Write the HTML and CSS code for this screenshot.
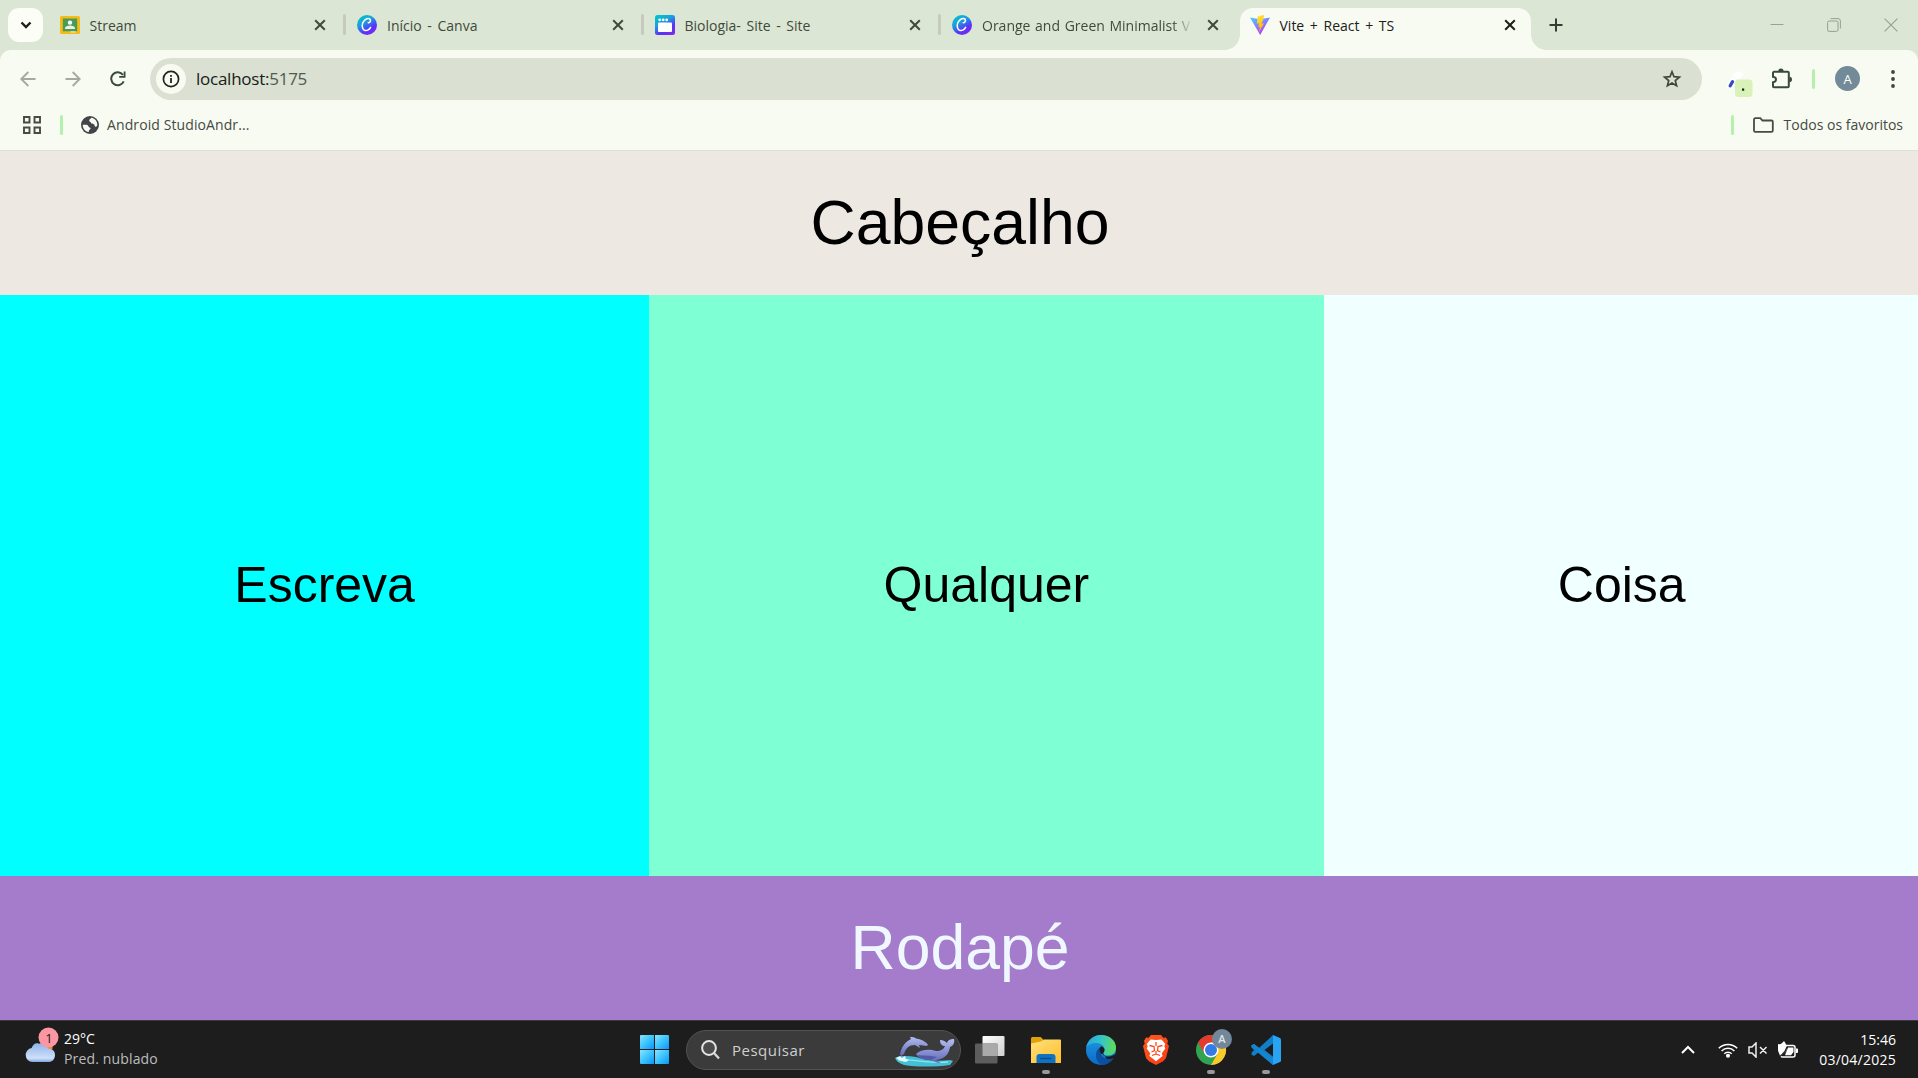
FILE: index.html
```html
<!DOCTYPE html>
<html lang="pt-BR">
<head>
<meta charset="utf-8">
<title>Vite + React + TS</title>
<link rel="stylesheet" href="styles.css">
</head>
<body>
<svg width="0" height="0" class="defs" aria-hidden="true">
  <defs>
    <linearGradient id="canva" x1="0.2" y1="0" x2="0.8" y2="1"><stop offset="0" stop-color="#00c4cc"/><stop offset=".35" stop-color="#1c9fdc"/><stop offset=".7" stop-color="#5a32fa"/><stop offset="1" stop-color="#7d2ae8"/></linearGradient>
    <linearGradient id="viteA" x1="0" y1="0" x2=".6" y2="1"><stop offset="0" stop-color="#41d1ff"/><stop offset="1" stop-color="#bd34fe"/></linearGradient>
    <linearGradient id="viteB" x1=".4" y1="0" x2=".6" y2="1"><stop offset="0" stop-color="#ffea83"/><stop offset=".1" stop-color="#ffdd35"/><stop offset="1" stop-color="#ffa800"/></linearGradient>
    <linearGradient id="win" x1="0" y1="0" x2="1" y2="1"><stop offset="0" stop-color="#8ae3ff"/><stop offset=".5" stop-color="#3cc4fd"/><stop offset="1" stop-color="#0a95fb"/></linearGradient>
    <linearGradient id="cloud" x1="0" y1="0" x2="0" y2="1"><stop offset="0" stop-color="#8fb2ea"/><stop offset=".8" stop-color="#cfe0f8"/><stop offset="1" stop-color="#7ea4e4"/></linearGradient>
    <linearGradient id="folder" x1="0" y1="0" x2="1" y2="1"><stop offset="0" stop-color="#ffe07c"/><stop offset="1" stop-color="#fdbf2d"/></linearGradient>
    <linearGradient id="edgeTop" x1="0" y1=".4" x2="1" y2=".5"><stop offset="0" stop-color="#23a9e4"/><stop offset=".5" stop-color="#35c5c4"/><stop offset="1" stop-color="#62dc55"/></linearGradient>
    <linearGradient id="edgeSide" x1="0" y1="0" x2="0" y2="1"><stop offset="0" stop-color="#2199e2"/><stop offset="1" stop-color="#0a6bc9"/></linearGradient>
    <linearGradient id="brave" x1="0" y1="0" x2="1" y2="1"><stop offset="0" stop-color="#ff5a1f"/><stop offset="1" stop-color="#fb3a12"/></linearGradient>
    <linearGradient id="whale" x1="0" y1="0" x2="0" y2="1"><stop offset="0" stop-color="#b3bdf0"/><stop offset="1" stop-color="#6067b8"/></linearGradient>
    <linearGradient id="tv" x1="0" y1="0" x2="1" y2="1"><stop offset="0" stop-color="#fff"/><stop offset="1" stop-color="#cfcfcf"/></linearGradient>
    <symbol id="close" viewBox="0 0 12 12"><path d="M1.2 1.2 10.8 10.8M10.8 1.2 1.2 10.8" stroke="currentColor" stroke-width="2" fill="none"/></symbol>
    <symbol id="canva-c" viewBox="0 0 20 20"><circle cx="10" cy="10" r="10" fill="url(#canva)"/><path d="M11.2 7.700c1.300.2 2.500-1.200 2.200-2.700C13 3.300 10.400 3 8.300 4.700 5.700 6.900 4.700 10.500 5.700 13.300c.9 2.500 3.500 2.800 5.500 1.600 1-.6 1.800-1.500 2.400-2.600" fill="none" stroke="#fff" stroke-width="1.500" stroke-linecap="round"/></symbol>
  </defs>
</svg>

<div class="tabstrip">
  <button class="tab-search"><svg width="12" height="8" viewBox="0 0 12 8"><path d="M1.500 1.500 6 6l4.500-4.500" fill="none" stroke="#1c211b" stroke-width="2.400"/></svg></button>
  <div class="tab">
    <svg class="fav" width="20" height="20" viewBox="0 0 20 20"><rect y="1" width="20" height="18" rx="1.500" fill="#f7bb16"/><rect x="2.800" y="3.500" width="14.400" height="12.800" fill="#4a9b58"/><circle cx="10" cy="7.600" r="2.200" fill="#fff"/><path d="M5 14v-.8c0-1.800 2.500-2.600 5-2.600s5 .8 5 2.600v.8z" fill="#e6f3e8"/><path d="M10.500 16.300h5V17.500h-5z" fill="#e5e5e5"/></svg>
    <span class="title">Stream</span>
    <svg class="x" width="12" height="12"><use href="#close"/></svg>
  </div>
  <div class="tab sep">
    <svg class="fav" width="20" height="20"><use href="#canva-c"/></svg>
    <span class="title">Início - Canva</span>
    <svg class="x" width="12" height="12"><use href="#close"/></svg>
  </div>
  <div class="tab sep">
    <svg class="fav" width="20" height="20" viewBox="0 0 20 20"><rect width="20" height="20" rx="2.500" fill="url(#canva)"/><rect x="3" y="7.500" width="14" height="9.500" rx="1" fill="#fff"/><g fill="#fff"><circle cx="4.700" cy="4.800" r="1.400"/><circle cx="8.200" cy="4.800" r="1.400"/><circle cx="11.700" cy="4.800" r="1.400"/></g></svg>
    <span class="title">Biologia- Site - Site</span>
    <svg class="x" width="12" height="12"><use href="#close"/></svg>
  </div>
  <div class="tab sep">
    <svg class="fav" width="20" height="20"><use href="#canva-c"/></svg>
    <span class="title long">Orange and Green Minimalist V</span>
    <svg class="x" width="12" height="12"><use href="#close"/></svg>
  </div>
  <div class="tab active">
    <svg class="fav" width="20" height="20" viewBox="0 0 20 20"><path d="M0 2.500 10.200 20 20 2.500 10 4.200z" fill="url(#viteA)"/><path d="M14.200 0 7.600 1.300 6.800 8.800l2.300-.5-.9 4 1.800-.5-1.200 5.700 5.300-9.300-2.700.5 2-4.200z" fill="url(#viteB)"/></svg>
    <span class="title">Vite + React + TS</span>
    <svg class="x" width="12" height="12"><use href="#close"/></svg>
  </div>
  <svg class="newtab" width="14" height="14" viewBox="0 0 14 14"><path d="M7 .5v13M.5 7h13" stroke="#343d32" stroke-width="2"/></svg>
  <div class="window-buttons">
    <svg width="14" height="14" viewBox="0 0 14 14"><path d="M.5 6.500h13" stroke="#99a294"/></svg>
    <svg width="14" height="14" viewBox="0 0 14 14" fill="none" stroke="#96a091"><rect x=".6" y="3" width="10.400" height="10.400" rx="1.500"/><path d="M3.500.6H11a2.400 2.400 0 0 1 2.400 2.400v7.500"/></svg>
    <svg width="14" height="14" viewBox="0 0 14 14"><path d="m.6.6 12.800 12.800M13.400.6.6 13.400" stroke="#96a091" stroke-width="1.100"/></svg>
  </div>
</div>

<div class="toolbar">
  <svg class="nav" width="16" height="16" viewBox="0 0 16 16" fill="none" stroke="#a4aaa1" stroke-width="1.900"><path d="M15.500 8H2M8.300 1 1.300 8l7 7"/></svg>
  <svg class="nav" width="16" height="16" viewBox="0 0 16 16" fill="none" stroke="#a4aaa1" stroke-width="1.900"><path d="M.5 8H14M7.700 1l7 7-7 7"/></svg>
  <svg class="nav" width="16" height="16" viewBox="0 0 16 16"><path d="M13.700 10.300A6.500 6.500 0 1 1 13 3.900" fill="none" stroke="#3a4a38" stroke-width="2"/><path d="M15.500.5V6.700H9.200V4.900h4.500V.5z" fill="#3a4a38"/></svg>
  <div class="omnibox">
    <span class="info"><svg width="18" height="18" viewBox="0 0 18 18"><circle cx="9" cy="9" r="7.600" fill="none" stroke="#20251f" stroke-width="1.700"/><path d="M8.100 8h1.800v5H8.100zM8.100 4.900h1.800v1.800H8.100z" fill="#20251f"/></svg></span>
    <span class="url">localhost:<span>5175</span></span>
    <svg class="star" width="20" height="20" viewBox="0 0 20 20"><path d="m10 2.800 2 4.900 5.400.4-4.100 3.500 1.300 5.200L10 14l-4.600 2.800 1.300-5.200-4.100-3.500 5.400-.4z" fill="none" stroke="#3f473c" stroke-width="1.700"/></svg>
  </div>
  <svg class="ext" width="28" height="28" viewBox="0 0 28 28"><path d="M6.500 4.500 12.500.8l5 3.500-4 5-3.500-.8z" fill="#fff"/><path d="m3.800 15.500 2.700-4.700" stroke="#fff" stroke-width="6" stroke-linecap="round"/><path d="m4.200 15.700 2.300-4" stroke="#334bc4" stroke-width="3.300" stroke-linecap="round"/><rect x="9" y="9.500" width="17.500" height="17.500" rx="3.500" fill="#d9f2b7"/><rect x="16" y="18.500" width="2.200" height="2.200" fill="#16200f"/></svg>
  <svg class="puzzle" width="22" height="22" viewBox="0 0 22 22"><path d="M3 3.800h13.800a1 1 0 0 1 1 1v13.400a1 1 0 0 1-1 1H3a1 1 0 0 1-1-1v-4c4-.8 4-4.800 0-5.400v-4a1 1 0 0 1 1-1z" fill="none" stroke="#3a4a38" stroke-width="2"/><path d="M7.200 3.300a2.700 2.700 0 0 1 5.400 0zM18.300 8.800a2.700 2.700 0 0 1 0 5.400z" fill="#3a4a38"/></svg>
  <i class="mint"></i>
  <span class="avatar">A</span>
  <svg class="dots" width="4" height="18" viewBox="0 0 4 18" fill="#3a4a38"><circle cx="2" cy="2" r="1.900"/><circle cx="2" cy="9" r="1.900"/><circle cx="2" cy="16" r="1.900"/></svg>
</div>

<div class="bookmarks">
  <svg width="18" height="18" viewBox="0 0 18 18" fill="none" stroke="#474b45" stroke-width="1.900"><path d="M1 1h5.500v5.500H1zM11.500 1H17v5.500h-5.500zM1 11.500h5.500V17H1zM11.500 11.500H17V17h-5.500z"/></svg>
  <i class="mint first"></i>
  <svg class="globe" width="18" height="18" viewBox="0 0 18 18"><circle cx="9" cy="9" r="9" fill="#41454a"/><path d="M10.200 1.800c-.4 1.300-1.800 1.200-2 2.700-.1 1.500 1.500 1 1.800 2.200.3 1.700 2.300.5 3.200 1.800.6 1 .2 1.900 1.300 2.200.9.200 1.600-.6 1.800-1.700C16.300 5 13.800 2.200 10.200 1.800zM1.700 8.700c1.500.4 4-.3 5.300.7.900.8.300 1.900 1.800 2.200 1.200.3.900 1.800-.2 2.100-.9.300-.6 1.400-.9 2.400C4 15.500 1.700 12.300 1.700 8.700z" fill="#f8fbf1"/></svg>
  <span class="bm">Android StudioAndr...</span>
  <i class="mint last"></i>
  <svg class="dir" width="21" height="16" viewBox="0 0 21 16"><path d="M1 13.500v-11A1.300 1.300 0 0 1 2.300 1.200h5L9.500 3.500h9a1.300 1.300 0 0 1 1.300 1.300v8.700a1.300 1.300 0 0 1-1.300 1.300H2.300A1.300 1.300 0 0 1 1 13.500z" fill="none" stroke="#474b45" stroke-width="1.800"/></svg>
  <span class="all">Todos os favoritos</span>
</div>

<main class="page">
  <header class="page-head">Cabeçalho</header>
  <section class="columns">
    <div class="escreva">Escreva</div>
    <div class="qualquer">Qualquer</div>
    <div class="coisa">Coisa</div>
  </section>
  <footer class="page-foot">Rodapé</footer>
</main>

<div class="taskbar">
  <div class="weather">
    <svg width="36" height="40" viewBox="0 0 36 40"><path d="M20 13h9.500v9H22z" fill="#f5831f"/><path d="M8.500 36a7.500 7.500 0 0 1-.6-14.900C9.500 16.800 12.500 15 16 16.500c3-2.300 8.500-.5 9.500 5 4.500-.3 8 3.200 7.500 7.500-.3 4-3 7-7 7z" fill="url(#cloud)" transform="translate(1.300 1.500) scale(.93)"/><circle cx="25.500" cy="10.500" r="10" fill="#fb96a3"/></svg>
    <b>1</b>
    <div><p>29°C</p><p class="dim">Pred. nublado</p></div>
  </div>
  <div class="apps">
    <span class="app"><svg width="29" height="29" viewBox="0 0 29 29" fill="url(#win)"><path d="M1 0h13v14H0V1a1 1 0 0 1 1-1z"/><path d="M15 0h13a1 1 0 0 1 1 1v13H15z"/><path d="M0 15h14v14H1a1 1 0 0 1-1-1z"/><path d="M15 15h14v13a1 1 0 0 1-1 1H15z"/></svg></span>
    <div class="search">
      <svg width="19" height="20" viewBox="0 0 19 20"><circle cx="8" cy="8" r="6.900" fill="#4c4c4c" stroke="#e4e4e4" stroke-width="2"/><path d="m13 13 5 5.500" stroke="#d8d8d8" stroke-width="2.400"/></svg>
      <span>Pesquisar</span>
      <svg class="dolphin" width="60" height="32" viewBox="0 0 60 32"><path d="M0 22c6-3 14-2 21-1 9 3 20 5 34 3l3 1-3 4c-14 2-34 2-46 0C4 27 1 25 0 22z" fill="#43bfd6"/><path d="M3 24c12-2 24 4 50 2" stroke="#8fe6ee" stroke-width="1.300" fill="none"/><path d="M5 18c2-8 5-12 11-15l-1-2c4-.5 5 .8 6 1.500 5 .5 9 3 12 6l-1 1.500-8-1 1 3-5-3c-6 0-9 3-11 9l-3 2z" fill="url(#whale)"/><path d="M21 18c5-5 14-5 20-3 5 0 8-2 9-5-3 0-5-2-5-6 3 0 5 1 7 3 1-3 3-4 7-4 1 4-1 7-4 8-1 7-5 12-14 13l5 3c-4 0-7-1-9-3-6 0-13-1-16-6z" fill="url(#whale)"/><path d="M22 19c7 1 12 0 20 2l-6 3c-6 0-10-1-14-5z" fill="#555aa7"/><path d="m1 22 4-2 2 2 3-2 1 3 3 1-3 2-5-1z" fill="#e9fbfd"/></svg>
    </div>
    <span class="app tv"><svg width="30" height="28" viewBox="0 0 30 28"><rect x="7.500" width="22" height="20" rx="1" fill="url(#tv)"/><rect x="0" y="7.500" width="22.500" height="20" rx="1" fill="#5d5d5d"/><path d="M7.500 7.500h15V20h-15z" fill="#aaa"/></svg></span>
    <span class="app run"><svg width="30" height="30" viewBox="0 0 30 30"><path d="M0 3.500A1.500 1.500 0 0 1 1.500 2h8.200l3 3H28v6H0z" fill="#e0a10c"/><path d="M0 8.500 10 6.500l3-2h16a1 1 0 0 1 1 1V28H0z" fill="url(#folder)"/><path d="M5.500 28v-6a3 3 0 0 1 3-3h13a3 3 0 0 1 3 3v6z" fill="#0f73c4"/><path d="M9 23.500h11.500" stroke="#0a4a8a" stroke-width="1.400"/></svg></span>
    <span class="app"><svg width="30" height="30" viewBox="0 0 30 30"><circle cx="15" cy="15" r="15" fill="url(#edgeSide)"/><path d="M.2 12.500C1.500 5 7.500 0 15 0c8.500 0 15 5.500 15 12.500 0 5-3.500 8-8 8-3.500 0-5-1.200-4.800-2.300.2-.7 1.500-1.500 1.300-4C18 10.300 14.500 8 10 8 5.500 8 2 9.700.2 12.500z" fill="url(#edgeTop)"/><path d="M17.200 18.200c-.8 1.800 1.500 3.600 5.500 3.400 2.700-.2 4.700-1.200 6-2l1.300-1V30H24z" fill="#1d1d1d"/><path d="M10 20c0-4 2-7 5.500-8.500-4 6 1 12.500 7.500 12.500 2 0 3.700-.6 4.700-1-2.500 4.300-7 7-12 7-3.500-1.500-5.700-5.500-5.700-10z" fill="#0c4fa0"/><path d="M18.500 14.200c-.5-1.500-1.500-2.500-3-3-3 1.500-2 6 0 8 1.200-.2 1.300-.7 1.700-1 .2-.7 1.500-1.500 1.300-4z" fill="#1d1d1d"/></svg></span>
    <span class="app"><svg width="26" height="30" viewBox="0 0 26 30"><path d="M8 0h10l2.300 2.700 2.700-.3 2 3.600-.8 2.500L26 11l-3 12-2.800 3.300L13 30l-7.200-3.700L3 23 0 11l1.800-2.500L1 6l2-3.600 2.700.3z" fill="url(#brave)"/><path d="m13 5 5.500-.6L22.300 9l-1 2.300 1 2.200-3.600 5 1 2.500-2.700 2L13 26.300 9 23l-2.700-2 1-2.500-3.600-5 1-2.200-1-2.300 3.800-4.600z" fill="#fff"/><path d="m6.500 10.500 4.500 1 .5 4-3 1.500M19.500 10.500l-4.500 1-.5 4 3 1.500M13 7v4M9 20.500l4-1.500 4 1.500M13 16v3" fill="none" stroke="#fb4a1c" stroke-width="1.300"/></svg></span>
    <span class="app run"><svg class="chrome" width="37" height="36" viewBox="0 0 37 36"><circle cx="15" cy="21" r="15" fill="#32a350"/><path d="M2 13.500A15 15 0 0 1 28 13.500H15L8.500 24.700z" fill="#e33b2e"/><path d="M28 13.500A15 15 0 0 1 15 36l6.500-11.200L15 13.500z" fill="#fcc92b"/><circle cx="15" cy="21" r="7.500" fill="#fff"/><circle cx="15" cy="21" r="6" fill="#347be8"/><circle cx="26" cy="10" r="10" fill="#72889a"/><text x="26" y="14" text-anchor="middle" font-size="11" font-weight="600" fill="#dfe5ea">A</text></svg></span>
    <span class="app run"><svg width="30" height="30" viewBox="0 0 30 30"><path d="M22 0 8 13 3 9 .5 10.300v2L3 15 .5 17.800v2L3 21l5-4 14 13z" fill="#0f7fca"/><path d="M22 8.500 13.500 15 22 21.500z" fill="#1d1d1d"/><path d="m3 9 19 14v7L.5 12.300v-2z" fill="#1685cf"/><path d="m22 0 7 3a1.800 1.800 0 0 1 1 1.600v20.800a1.800 1.800 0 0 1-1 1.600l-7 3z" fill="#28a4f2"/></svg></span>
  </div>
  <div class="tray">
    <svg width="14" height="9" viewBox="0 0 14 9"><path d="m1 8 6-6 6 6" fill="none" stroke="#fff" stroke-width="2"/></svg>
    <svg class="wifi" width="20" height="16" viewBox="0 0 20 16" fill="none" stroke="#fff" stroke-width="1.500"><path d="M.8 6.200a13 13 0 0 1 18.400 0M3.600 9a9 9 0 0 1 12.800 0M6.300 11.700a5.200 5.200 0 0 1 7.400 0"/><circle cx="10" cy="13.800" r="1.300" fill="#fff"/></svg>
    <svg class="sound" width="20" height="16" viewBox="0 0 20 16" fill="none" stroke="#eee" stroke-width="1.500"><path d="M1 5h3l4-4v14l-4-4H1zM12 5l6.500 6.500M18.500 5 12 11.500"/></svg>
    <svg class="battery" width="20" height="18" viewBox="0 0 20 18"><rect x="2.500" y="4.500" width="14.500" height="11.500" rx="2" fill="none" stroke="#fff" stroke-width="1.500"/><path d="M10 6.500h5.500V11l-2.500 3.200H7zM18 7.500h1.200a.8.800 0 0 1 .8.800v3a.8.800 0 0 1-.8.800H18z" fill="#fff"/><path d="M0 3c3 1 4-1 6-3 3 4 4 8 1 11.500L3 15l-1.500-2C-.5 10-.5 6 0 3z" fill="#fff"/><path d="M1.500 16c3-3 6-4 7.500-10" fill="none" stroke="#1d1d1d" stroke-width="1.200"/></svg>
    <div class="clock"><p>15:46</p><p class="date">03/04/2025</p></div>
  </div>
</div>
</body>
</html>
```
FILE: styles.css
```css
* { box-sizing: border-box; }
body {
  margin: 0;
  width: 1918px;
  height: 1078px;
  overflow: hidden;
  display: flex;
  flex-direction: column;
  background: #f8fbf1;
  font-family: "Open Sans", "Noto Sans", sans-serif;
  font-size: 14px;
  color: #3f4a3c;
}
svg { display: block; flex: none; }
.defs { position: absolute; }
p { margin: 0; }

.tabstrip {
  height: 50px;
  flex: none;
  display: flex;
  align-items: center;
  background: #dbe6d4;
}
.tab-search {
  width: 35px;
  height: 34px;
  margin: 0 4.500px 0 8px;
  padding: 0;
  border: 0;
  border-radius: 11px;
  background: #fbfdf6;
  display: grid;
  place-items: center;
}
.tab {
  position: relative;
  width: 297.500px;
  height: 50px;
  flex: none;
  display: flex;
  align-items: center;
  padding: 0 19px 0 12px;
}
.tab.sep::before {
  content: "";
  position: absolute;
  left: -2px;
  top: 14px;
  width: 3px;
  height: 21px;
  border-radius: 2px;
  background: #c5cabd;
}
.title {
  width: 212px;
  margin-left: 10px;
  padding-top: 1px;
  white-space: nowrap;
  letter-spacing: 0;
  word-spacing: 2px;
}
.long {
  word-spacing: 1px;
  -webkit-mask-image: linear-gradient(90deg, #000 190px, transparent 211px);
  mask-image: linear-gradient(90deg, #000 190px, transparent 211px);
}
.x { margin-left: auto; }
.tab.active { color: #1b201a; z-index: 1; }
.tab.active::before {
  content: "";
  position: absolute;
  z-index: -1;
  left: 2.500px;
  right: 4.500px;
  top: 7.500px;
  bottom: 0;
  border-radius: 13px 13px 0 0;
  background: #f8fbf1;
}
.tab.active::after {
  content: "";
  position: absolute;
  z-index: -1;
  left: -12.500px;
  right: -10.500px;
  bottom: 0;
  height: 15px;
  background:
    radial-gradient(circle at 0 0, transparent 14.500px, #f8fbf1 15px) left / 15px 15px no-repeat,
    radial-gradient(circle at 100% 0, transparent 14.500px, #f8fbf1 15px) right / 15px 15px no-repeat;
}
.newtab { margin-left: 14px; }
.window-buttons {
  display: flex;
  gap: 43px;
  margin-left: auto;
  padding-right: 20px;
}

.toolbar {
  height: 58px;
  flex: none;
  display: flex;
  align-items: center;
  padding: 0 23px 0 20px;
  background: #f8fbf1;
  border-radius: 11px 11px 0 0;
  box-shadow: 0 -12px 0 #dbe6d4;
  clip-path: inset(0);
}
.nav { margin: 0 29px 1px 0; }
.nav:nth-child(3) { margin-right: 24px; }
.omnibox {
  width: 1552px;
  height: 42px;
  display: flex;
  align-items: center;
  padding: 0 20px 0 6px;
  border-radius: 21px;
  background: #dae1d2;
}
.info {
  width: 30px;
  height: 30px;
  border-radius: 50%;
  background: #f8fbf1;
  display: grid;
  place-items: center;
}
.url { margin: 0 0 1px 10px; font-size: 17px; letter-spacing: -0.250px; color: #171c16; }
.url span { color: #50594d; }
.star { margin-left: auto; }
.ext { margin: 9px 0 0 24px; }
.puzzle { margin-left: 17px; }
.mint { width: 3px; height: 20px; border-radius: 2px; background: #b4f1ad; }
.toolbar .mint { margin-left: 19px; }
.avatar {
  width: 25px;
  height: 25px;
  margin: 0 0 1px 20px;
  border-radius: 50%;
  background: #738b99;
  color: #fff;
  font-size: 13px;
  line-height: 26px;
  text-align: center;
}
.dots { margin-left: auto; }

.bookmarks {
  height: 43px;
  flex: none;
  display: flex;
  align-items: center;
  padding: 0 15px 8px 23px;
  border-bottom: 1px solid #dbe2d5;
}
.bookmarks .first { margin-left: 19px; }
.globe { margin-left: 18px; }
.bm { margin-left: 8px; letter-spacing: 0.100px; }
.bookmarks .last { margin-left: auto; }
.dir { margin: 0 10px 0 19px; }
.bm, .all { color: #454944; white-space: nowrap; padding-bottom: 2px; }

.page {
  width: 1920px;
  flex: 1;
  display: flex;
  flex-direction: column;
  font-family: "Liberation Sans", Arial, sans-serif;
  color: #000;
}
.page-head, .page-foot {
  height: 144px;
  padding-bottom: 2px;
  display: grid;
  place-items: center;
  font-size: 62.500px;
}
.page-head { background: #eee8e2; }
.page-foot { background: #a57bcb; color: #f0f8ff; }
.columns { flex: 1; display: flex; font-size: 50px; }
.columns > div {
  flex: 1 1 auto;
  display: flex;
  align-items: center;
  justify-content: center;
  padding-bottom: 2px;
}
.escreva { background: #00ffff; }
.qualquer { background: #7fffd4; }
.coisa { background: #f0ffff; }

.taskbar {
  height: 58px;
  flex: none;
  display: flex;
  background: #1d1d1d;
  border-top: 1px solid #3a3a3a;
  color: #fff;
  line-height: 20px;
}
.weather { position: relative; width: 627px; display: flex; padding: 6px 0 0 23px; }
.weather > b {
  position: absolute;
  left: 39px;
  top: 7px;
  width: 20px;
  text-align: center;
  font-weight: 400;
  font-size: 13px;
  color: #2b1518;
}
.weather > div { margin: 2px 0 0 5px; }
.weather .dim { color: #bdbdbd; letter-spacing: 0.150px; }
.apps { display: flex; height: 57px; align-items: center; }
.app {
  position: relative;
  width: 55px;
  height: 57px;
  display: grid;
  place-items: center;
}
.app.tv { margin-left: 1px; }
.app.tv + .app { margin-left: 1px; }
.app.run::after {
  content: "";
  position: absolute;
  left: 24px;
  bottom: 4px;
  width: 8px;
  height: 4px;
  border-radius: 2px;
  background: #989898;
}
.chrome { margin: -6px -7px 0 0; }
.search {
  width: 275px;
  height: 40px;
  margin-left: 4px;
  padding: 0 5px 0 14px;
  display: flex;
  align-items: center;
  border: 1px solid #525252;
  border-radius: 20px;
  background: #3b3b3b;
  color: #cfcfcf;
  font-size: 15px;
  letter-spacing: 0.500px;
}
.search span { margin-left: 12px; }
.dolphin { margin: 4px 0 0 auto; }
.tray { flex: 1; display: flex; align-items: center; justify-content: flex-end; padding-right: 22px; }
.wifi { margin-left: 23px; }
.sound { margin-left: 10px; }
.battery { margin-left: 10px; }
.clock { width: 98px; text-align: right; white-space: nowrap; }
.date { letter-spacing: 0.250px; }
```
